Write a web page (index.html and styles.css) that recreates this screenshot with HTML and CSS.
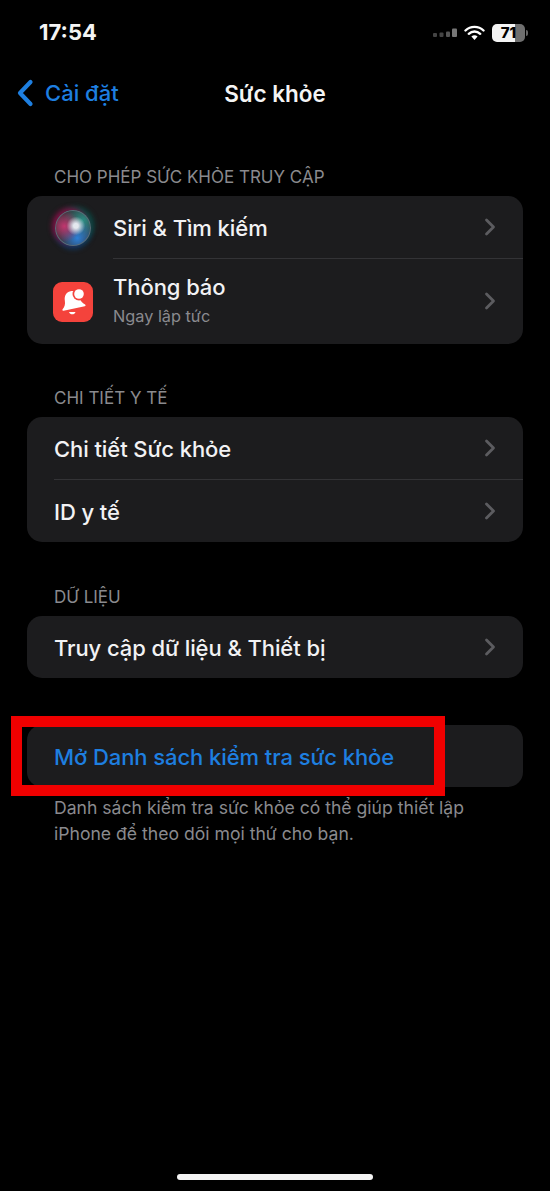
FILE: index.html
```html
<!DOCTYPE html>
<html lang="vi">
<head>
<meta charset="utf-8">
<title>Sức khỏe</title>
<link rel="stylesheet" href="styles.css">
</head>
<body>
<div class="screen">
  <div class="status">
    <span class="time">17:54</span>
    <div class="status-icons">
      <svg class="signal" width="24" height="10" viewBox="0 0 24 10"><rect x="0" y="5" width="4" height="4" rx="1" fill="#444"/><rect x="6.500" y="4.500" width="4" height="4.500" rx="1" fill="#444"/><rect x="13" y="3.500" width="4" height="5.500" rx="1" fill="#555"/><rect x="19" y="0.500" width="5" height="8.500" rx="1" fill="#777"/></svg>
      <svg class="wifi" width="21" height="16" viewBox="0 0 21 16"><path d="M1.500 5.500a13 13 0 0 1 18 0M4.800 8.800a8.400 8.400 0 0 1 11.400 0" fill="none" stroke="#fff" stroke-width="2.400" stroke-linecap="round"/><path d="M7.400 11.600a4.500 4.500 0 0 1 6.200 0l-3.100 3.400z" fill="#fff"/></svg>
      <div class="battery"><div class="batt-body"><span class="batt-num">71</span></div><i class="batt-cap"></i></div>
    </div>
  </div>
  <div class="nav">
    <a class="back">
      <svg width="20" height="28" viewBox="0 0 20 28"><path d="M15.500 3 5 14l10.500 11" fill="none" stroke="#1e7fe0" stroke-width="4.200" stroke-linecap="round" stroke-linejoin="round"/></svg>
      <span>Cài đặt</span>
    </a>
    <h1 class="title">Sức khỏe</h1>
  </div>

  <div class="sec-label first">CHO PHÉP SỨC KHỎE TRUY CẬP</div>
  <div class="card">
    <div class="row row-icon">
      <div class="siri"><div class="siri-ball"></div></div>
      <span class="row-text">Siri &amp; Tìm kiếm</span>
      <svg class="chev" width="12" height="18" viewBox="0 0 12 18"><path d="M2.500 2 9.500 9l-7 7" fill="none" stroke="#5c5c60" stroke-width="2.800" stroke-linecap="round" stroke-linejoin="round"/></svg>
    </div>
    <div class="divider inset"></div>
    <div class="row row-icon row-tall">
      <div class="notif">
        <svg width="34" height="34" viewBox="0 0 34 34"><g transform="rotate(-12 17 18)"><path d="M17 6c-4.800 0-7.200 3.500-7.500 8-.2 3.800-1.500 5.800-4 8-.7.700-.2 1.700.7 1.700h21.600c.9 0 1.400-1 .7-1.700-2.500-2.200-3.800-4.200-4-8C24.200 9.500 21.800 6 17 6z" fill="#fff"/></g><path d="M13 27h6.500c-.5 1.500-1.800 2.300-3.200 2.300S13.500 28.500 13 27z" fill="#fff"/><circle cx="23" cy="9" r="6.500" fill="#f4433c"/><circle cx="23" cy="9" r="4.800" fill="#fff"/></svg>
      </div>
      <div class="stack">
        <span class="row-text">Thông báo</span>
        <span class="row-sub">Ngay lập tức</span>
      </div>
      <svg class="chev" width="12" height="18" viewBox="0 0 12 18"><path d="M2.500 2 9.500 9l-7 7" fill="none" stroke="#5c5c60" stroke-width="2.800" stroke-linecap="round" stroke-linejoin="round"/></svg>
    </div>
  </div>

  <div class="sec-label">CHI TIẾT Y TẾ</div>
  <div class="card">
    <div class="row">
      <span class="row-text">Chi tiết Sức khỏe</span>
      <svg class="chev" width="12" height="18" viewBox="0 0 12 18"><path d="M2.500 2 9.500 9l-7 7" fill="none" stroke="#5c5c60" stroke-width="2.800" stroke-linecap="round" stroke-linejoin="round"/></svg>
    </div>
    <div class="divider"></div>
    <div class="row">
      <span class="row-text">ID y tế</span>
      <svg class="chev" width="12" height="18" viewBox="0 0 12 18"><path d="M2.500 2 9.500 9l-7 7" fill="none" stroke="#5c5c60" stroke-width="2.800" stroke-linecap="round" stroke-linejoin="round"/></svg>
    </div>
  </div>

  <div class="sec-label data">DỮ LIỆU</div>
  <div class="card">
    <div class="row">
      <span class="row-text">Truy cập dữ liệu &amp; Thiết bị</span>
      <svg class="chev" width="12" height="18" viewBox="0 0 12 18"><path d="M2.500 2 9.500 9l-7 7" fill="none" stroke="#5c5c60" stroke-width="2.800" stroke-linecap="round" stroke-linejoin="round"/></svg>
    </div>
  </div>

  <div class="card card-action">
    <div class="row">
      <span class="row-text link">Mở Danh sách kiểm tra sức khỏe</span>
    </div>
    <div class="highlight"></div>
  </div>
  <p class="footnote">Danh sách kiểm tra sức khỏe có thể giúp thiết lập<br>iPhone để theo dõi mọi thứ cho bạn.</p>

  <div class="home-bar"></div>
</div>
</body>
</html>
```

FILE: styles.css
```css
* { box-sizing: border-box; }
html, body { margin: 0; padding: 0; background: #000; }
body { font-family: Inter, "Liberation Sans", sans-serif; color: #f2f2f4; }
.screen { position: relative; width: 550px; height: 1191px; overflow: hidden; background: #000; display: flex; flex-direction: column; }

.status { height: 62px; padding: 19px 22px 0 39px; display: flex; justify-content: space-between; align-items: flex-start; }
.time { font-size: 22px; line-height: 27px; font-weight: 700; color: #f4f4f4; }
.status-icons { display: flex; align-items: center; gap: 7px; height: 27px; }
.battery { display: flex; align-items: center; gap: 1px; }
.batt-body { width: 33px; height: 18px; border-radius: 5px; background: linear-gradient(90deg, #f4f4f4 0 71%, #6f6f6f 71% 100%); display: flex; align-items: center; justify-content: center; }
.batt-num { font-size: 15px; font-weight: 800; color: #000; }
.batt-cap { width: 2px; height: 6px; background: #666; border-radius: 0 2px 2px 0; }

.nav { position: relative; height: 62px; display: flex; align-items: center; justify-content: center; }
.back { position: absolute; left: 15px; top: 16px; display: flex; align-items: center; gap: 10px; color: #1e7fe0; font-size: 22px; line-height: 30px; font-weight: 500; }
.title { margin: 0; font-size: 22.500px; font-weight: 600; color: #f4f4f4; }

.sec-label { margin: 43px 0 0; padding-left: 54px; height: 22px; font-size: 17px; line-height: 22px; color: #8a8a8e; }
.sec-label.first { margin-top: 42px; }
.sec-label.data { margin-top: 44px; }

.card { margin: 8px 27px 0; background: #1c1c1e; border-radius: 15px; }
.row { height: 62px; padding: 1px 27px 0 27px; display: flex; align-items: center; }
.row-text { font-size: 22px; line-height: 30px; font-weight: 500; letter-spacing: -.08px; color: #f2f2f4; flex: 0 1 auto; }
.row-icon { padding-left: 26px; gap: 20px; }
.row-tall { height: 85px; padding-top: 0; }
.chev { margin-left: auto; margin-top: -2px; }
.stack { display: flex; flex-direction: column; margin-top: -5px; }
.row-sub { font-size: 16.300px; line-height: 20px; margin-top: 4px; color: #8a8a8e; }
.divider { height: 1px; margin-left: 27px; background: #333336; }
.divider.inset { margin-left: 86px; }

.siri { width: 40px; height: 40px; display: flex; align-items: center; justify-content: center; }
.siri-ball { width: 36px; height: 36px; border-radius: 50%; background:
  radial-gradient(circle at 58% 44%, #e4e8ee 0 8%, transparent 32%),
  radial-gradient(circle at 26% 45%, #c2366f 0, transparent 48%),
  radial-gradient(circle at 62% 78%, #2d7fd6 0, transparent 50%),
  radial-gradient(circle at 76% 30%, #2c8f86 0, transparent 50%),
  #34343a; box-shadow: inset 0 0 0 1px #5a6d78, -3px -2px 5px #7a1040, 3px -3px 5px #0c4a44, 0 3px 5px #123a66; }
.notif { width: 40px; height: 40px; border-radius: 9px; background: #f4433c; display: flex; align-items: center; justify-content: center; }

.card-action { position: relative; margin-top: 47px; }
.link { color: #1e7fe0; }
.highlight { position: absolute; left: -16px; top: -9px; width: 434px; height: 80px; border: 11px solid #f00000; }
.footnote { margin: 8px 0 0; padding-left: 54px; font-size: 17.600px; line-height: 26px; color: #8a8a8e; }

.home-bar { position: absolute; left: 177px; top: 1174px; width: 196px; height: 6px; border-radius: 3px; background: #f4f4f4; }
```
